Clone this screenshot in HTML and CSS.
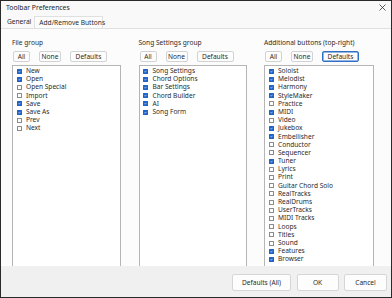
FILE: index.html
```html
<!DOCTYPE html>
<html>
<head>
<meta charset="utf-8">
<link rel="stylesheet" href="styles.css">
</head>
<body>
<div class="window">
  <div class="titlebar">
    <span class="title">Toolbar Preferences</span>
    <svg class="close" width="7" height="7" viewBox="0 0 7 7"><path d="M0.5 0.5L6.5 6.5M6.5 0.5L0.5 6.5" stroke="#333" stroke-width="0.8"/></svg>
  </div>
  <div class="tabs">
    <span class="tab">General</span>
    <span class="tab active">Add/Remove Buttons</span>
  </div>
  <div class="page">
    <div class="group">
      <div class="label">File group</div>
      <div class="btns">
        <span class="btn w-all">All</span><span class="btn w-none">None</span><span class="btn w-def">Defaults</span>
      </div>
      <div class="list">
        <div class="item"><span class="cb on"></span>New</div>
        <div class="item"><span class="cb on"></span>Open</div>
        <div class="item"><span class="cb"></span>Open Special</div>
        <div class="item"><span class="cb"></span>Import</div>
        <div class="item"><span class="cb on"></span>Save</div>
        <div class="item"><span class="cb on"></span>Save As</div>
        <div class="item"><span class="cb"></span>Prev</div>
        <div class="item"><span class="cb"></span>Next</div>
      </div>
    </div>
    <div class="group">
      <div class="label">Song Settings group</div>
      <div class="btns">
        <span class="btn w-all">All</span><span class="btn w-none">None</span><span class="btn w-def">Defaults</span>
      </div>
      <div class="list">
        <div class="item"><span class="cb on"></span>Song Settings</div>
        <div class="item"><span class="cb on"></span>Chord Options</div>
        <div class="item"><span class="cb on"></span>Bar Settings</div>
        <div class="item"><span class="cb on"></span>Chord Builder</div>
        <div class="item"><span class="cb on"></span>AI</div>
        <div class="item"><span class="cb on"></span>Song Form</div>
      </div>
    </div>
    <div class="group">
      <div class="label">Additional buttons (top-right)</div>
      <div class="btns">
        <span class="btn w-all">All</span><span class="btn w-none">None</span><span class="btn w-def focus">Defaults</span>
      </div>
      <div class="list">
        <div class="item"><span class="cb on"></span>Soloist</div>
        <div class="item"><span class="cb on"></span>Melodist</div>
        <div class="item"><span class="cb on"></span>Harmony</div>
        <div class="item"><span class="cb on"></span>StyleMaker</div>
        <div class="item"><span class="cb"></span>Practice</div>
        <div class="item"><span class="cb on"></span>MIDI</div>
        <div class="item"><span class="cb"></span>Video</div>
        <div class="item"><span class="cb on"></span>Jukebox</div>
        <div class="item"><span class="cb on"></span>Embellisher</div>
        <div class="item"><span class="cb"></span>Conductor</div>
        <div class="item"><span class="cb"></span>Sequencer</div>
        <div class="item"><span class="cb on"></span>Tuner</div>
        <div class="item"><span class="cb"></span>Lyrics</div>
        <div class="item"><span class="cb"></span>Print</div>
        <div class="item"><span class="cb"></span>Guitar Chord Solo</div>
        <div class="item"><span class="cb"></span>RealTracks</div>
        <div class="item"><span class="cb"></span>RealDrums</div>
        <div class="item"><span class="cb"></span>UserTracks</div>
        <div class="item"><span class="cb"></span>MIDI Tracks</div>
        <div class="item"><span class="cb"></span>Loops</div>
        <div class="item"><span class="cb"></span>Titles</div>
        <div class="item"><span class="cb"></span>Sound</div>
        <div class="item"><span class="cb on"></span>Features</div>
        <div class="item"><span class="cb on"></span>Browser</div>
      </div>
    </div>
  </div>
  <div class="footer">
    <span class="fbtn w-dall">Defaults (All)</span>
    <span class="fbtn w-ok">OK</span>
    <span class="fbtn w-cancel">Cancel</span>
  </div>
</div>
</body>
</html>
```
FILE: styles.css
```css
* { box-sizing: border-box; }
html, body { margin: 0; padding: 0; }
body {
  font-family: "Noto Sans", "Open Sans", sans-serif;
  font-size: 6.6px;
  color: #2a2a2a;
  background: #fff;
}
.window {
  width: 392px;
  height: 298px;
  border: 1px solid #2a2a2a;
  background: #f9f9f9;
  display: flex;
  flex-direction: column;
  overflow: hidden;
}
.titlebar {
  height: 14px;
  display: flex;
  align-items: center;
  justify-content: space-between;
  padding: 0 5px 1px 5px;
}
.title { font-size: 6.8px; color: #222; }
.close { display: block; margin-top: -1px; }
.tabs {
  height: 13px;
  display: flex;
  align-items: flex-end;
  padding-left: 4px;
}
.tab {
  height: 11px;
  line-height: 10px;
  padding: 0 2px;
  white-space: nowrap;
}
.tab.active {
  background: #fcfcfc;
  border: 1px solid #e0e0e0;
  border-bottom: none;
  height: 12px;
  line-height: 11px;
  padding: 0 4px;
  margin-left: 1px;
  width: 69px;
}
.page {
  flex: 1;
  background: #fcfcfc;
  border-top: 1px solid #e0e0e0;
  display: grid;
  grid-template-columns: 109px 108px 110px;
  column-gap: 17.5px;
  padding-left: 11px;
  padding-top: 9px;
}
.group {
  display: flex;
  flex-direction: column;
  min-height: 0;
}
.label { height: 10px; line-height: 10px; }
.btns {
  display: flex;
  gap: 9px;
  padding-left: 1px;
  margin-top: 3px;
  height: 11px;
}
.btn {
  height: 11px;
  line-height: 10px;
  text-align: center;
  background: #fdfdfd;
  border: 1px solid #d2d2d2;
  border-radius: 2px;
}
.btn.focus {
  border-color: #2f6fc4;
  box-shadow: inset 0 0 0 0.5px #2f6fc4;
}
.w-all { width: 17px; }
.w-none { width: 22px; }
.w-def { width: 37px; }
.list {
  margin-top: 3px;
  flex: 1;
  background: #fff;
  border: 1px solid #b5b5b5;
  border-bottom: none;
  padding: 1px 0 0 3.5px;
}
.item {
  height: 8.2px;
  line-height: 8.2px;
  display: flex;
  align-items: center;
  white-space: nowrap;
}
.cb {
  width: 5px;
  height: 5px;
  border: 0.6px solid #8a8a8a;
  background: #fff;
  margin-right: 4.5px;
  flex: none;
  border-radius: 0.5px;
  display: flex;
}
.cb.on {
  background: #1f63c6 url("data:image/svg+xml;utf8,<svg xmlns='http://www.w3.org/2000/svg' viewBox='0 0 10 10'><path d='M1.8 5.2L4 7.4L8.4 2.6' fill='none' stroke='white' stroke-width='2'/></svg>") center / 100% 100% no-repeat;
  border-color: #1f63c6;
}
.footer {
  height: 31px;
  background: #f0f0f0;
  display: flex;
  align-items: center;
  justify-content: flex-end;
  gap: 5.5px;
  padding-right: 4px;
  padding-top: 1px;
}
.fbtn {
  height: 17px;
  line-height: 16px;
  text-align: center;
  background: #fdfdfd;
  border: 1px solid #d6d6d6;
  border-radius: 2px;
}
.w-dall { width: 59px; }
.w-ok { width: 42px; }
.w-cancel { width: 43px; }
```
